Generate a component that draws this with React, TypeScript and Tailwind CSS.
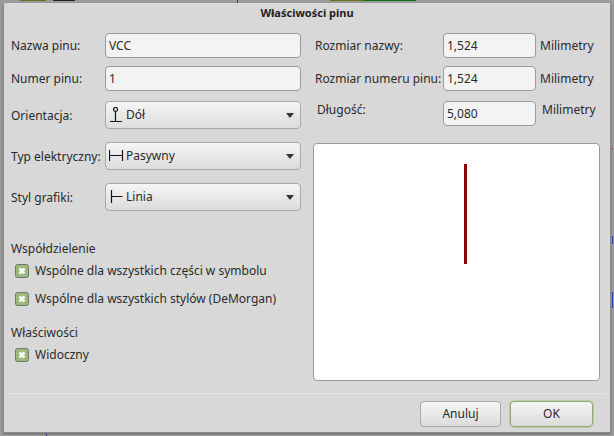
const font = { fontFamily: '"Noto Sans", sans-serif' };

function Label({ children, className = "" }: { children: React.ReactNode; className?: string }) {
  return <span className={`text-[12px] leading-[17px] text-[#2a2a2a] whitespace-nowrap ${className}`}>{children}</span>;
}

function TextField({ value, className = "" }: { value: string; className?: string }) {
  return (
    <div className={`h-[25px] flex items-center px-[3px] bg-[#f3f3f3] border border-[#9a9a9a] rounded-[4px] text-[12px] text-[#2a2a2a] ${className}`}>
      {value}
    </div>
  );
}

function Select({ icon, value }: { icon: React.ReactNode; value: string }) {
  return (
    <div className="w-[196px] h-[28px] flex items-center pl-[3px] pr-[6px] bg-gradient-to-b from-[#f5f5f5] to-[#dcdcdc] border border-[#a8a8a8] rounded-[4px] text-[12px] text-[#2a2a2a]">
      <span className="w-[17px] h-[16px] shrink-0">{icon}</span>
      <span>{value}</span>
      <span className="ml-auto w-0 h-0 border-x-[4px] border-x-transparent border-t-[5px] border-t-[#333]" />
    </div>
  );
}

function Check({ label, className = "" }: { label: string; className?: string }) {
  return (
    <div className={`flex items-center gap-[6px] pl-[4px] ${className}`}>
      <svg width="14" height="14" viewBox="0 0 14 14" className="shrink-0">
        <rect x="0.5" y="0.5" width="13" height="13" rx="2" fill="#9ab87c" stroke="#6f7a66" />
        <path d="M4.5 4.5L9.5 9.5M9.5 4.5L4.5 9.5" stroke="#f8f8f8" strokeWidth="2.8" />
      </svg>
      <Label>{label}</Label>
    </div>
  );
}

const iconDown = (
  <svg width="17" height="16" viewBox="0 0 17 16" fill="none" stroke="#111" strokeWidth="1.2">
    <circle cx="6.5" cy="2.5" r="2" />
    <path d="M6.5 4.5V14M1 14.5H13" />
  </svg>
);
const iconPassive = (
  <svg width="17" height="16" viewBox="0 0 17 16" fill="none" stroke="#111" strokeWidth="1.2">
    <path d="M0.5 2V13M0.5 7.5H13.5M13.5 2V13" />
  </svg>
);
const iconLine = (
  <svg width="17" height="16" viewBox="0 0 17 16" fill="none" stroke="#111" strokeWidth="1.2">
    <path d="M2.5 1V14M2.5 7.5H13.5" />
  </svg>
);

export default function App() {
  return (
    <div className="relative w-[614px] h-[436px] bg-[#9c9c9c] overflow-hidden p-[3px]" style={font}>
      {/* bits of the schematic behind the dialog */}
      <span className="absolute left-[20px] top-0 w-[26px] h-[1px] bg-[#6f6f1e]" />
      <span className="absolute left-[53px] top-0 w-[22px] h-[1px] bg-[#222]" />
      <span className="absolute left-[237px] top-0 w-[1px] h-[3px] bg-[#6a1f7a]" />
      <span className="absolute left-[330px] top-0 w-[33px] h-[1px] bg-[#6f6f1e]" />
      <span className="absolute left-[363px] top-0 w-[53px] h-[1px] bg-[#0b6b12]" />
      <span className="absolute left-[46px] top-[433px] w-[1px] h-[3px] bg-[#3a1a6a]" />
      <span className="absolute left-[612px] top-[148px] w-[1px] h-[1px] bg-[#8b1a1a]" />
      <span className="absolute left-[612px] top-[236px] w-[1px] h-[8px] bg-[#2a3fb0]" />
      <span className="absolute left-[612px] top-[292px] w-[1px] h-[16px] bg-[#2a3fb0]" />

      <div className="relative w-full h-full flex flex-col bg-[#d8d8d8] border-x border-b border-[#8c8c8c] shadow-[0_1px_2px_#666]">
        <div className="h-[20px] pt-[1px] text-center text-[11px] leading-[17px] font-bold text-[#222]">Właściwości pinu</div>

        <div className="flex-1 flex pl-[7px] pt-[10px]">
          <div className="w-[301px] shrink-0 flex flex-col">
            <div className="flex items-center h-[25px]">
              <Label className="w-[94px]">Nazwa pinu:</Label>
              <TextField value="VCC" className="w-[196px]" />
            </div>
            <div className="flex items-center h-[25px] mt-[8px]">
              <Label className="w-[94px]">Numer pinu:</Label>
              <TextField value="1" className="w-[196px]" />
            </div>
            <div className="flex items-center mt-[10px]">
              <Label className="w-[94px]">Orientacja:</Label>
              <Select icon={iconDown} value="Dół" />
            </div>
            <div className="flex items-center mt-[13px]">
              <Label className="w-[94px]">Typ elektryczny:</Label>
              <Select icon={iconPassive} value="Pasywny" />
            </div>
            <div className="flex items-center mt-[13px]">
              <Label className="w-[94px]">Styl grafiki:</Label>
              <Select icon={iconLine} value="Linia" />
            </div>
            <Label className="mt-[29px]">Współdzielenie</Label>
            <Check label="Wspólne dla wszystkich części w symbolu" className="mt-[5px]" />
            <Check label="Wspólne dla wszystkich stylów (DeMorgan)" className="mt-[11px]" />
            <Label className="mt-[17px]">Właściwości</Label>
            <Check label="Widoczny" className="mt-[5px]" />
          </div>

          <div className="flex-1 flex flex-col pl-[3px]">
            <div className="flex items-center h-[25px]">
              <Label className="w-[128px]">Rozmiar nazwy:</Label>
              <TextField value="1,524" className="w-[93px]" />
              <Label className="ml-[4px]">Milimetry</Label>
            </div>
            <div className="flex items-center h-[25px] mt-[8px]">
              <Label className="w-[128px]">Rozmiar numeru pinu:</Label>
              <TextField value="1,524" className="w-[93px]" />
              <Label className="ml-[4px]">Milimetry</Label>
            </div>
            <div className="flex items-start h-[25px] mt-[10px]">
              <Label className="w-[128px] pl-[2px]">Długość:</Label>
              <TextField value="5,080" className="w-[93px]" />
              <Label className="ml-[6px]">Milimetry</Label>
            </div>
            <div className="w-[287px] h-[238px] mt-[17px] ml-[-2px] pl-[150px] pt-[20px] bg-white border border-[#9a9a9a] rounded-[4px]">
              <div className="w-[3px] h-[100px] bg-[#8b0000]" />
            </div>
          </div>
        </div>

        <div className="h-[39px] mx-[4px] border-t border-[#e6e6e6] flex justify-end items-start gap-[9px] pt-[7px] pr-[13px]">
          <button className="w-[81px] h-[26px] bg-gradient-to-b from-[#f5f5f5] to-[#dcdcdc] border border-[#a8a8a8] rounded-[4px] text-[12px] text-[#2a2a2a]">Anuluj</button>
          <button className="w-[83px] h-[26px] bg-gradient-to-b from-[#f5f5f5] to-[#dcdcdc] border border-[#8fa877] rounded-[4px] text-[12px] text-[#2a2a2a] shadow-[0_0_0_1px_#b9cda4]">OK</button>
        </div>
      </div>
    </div>
  );
}
